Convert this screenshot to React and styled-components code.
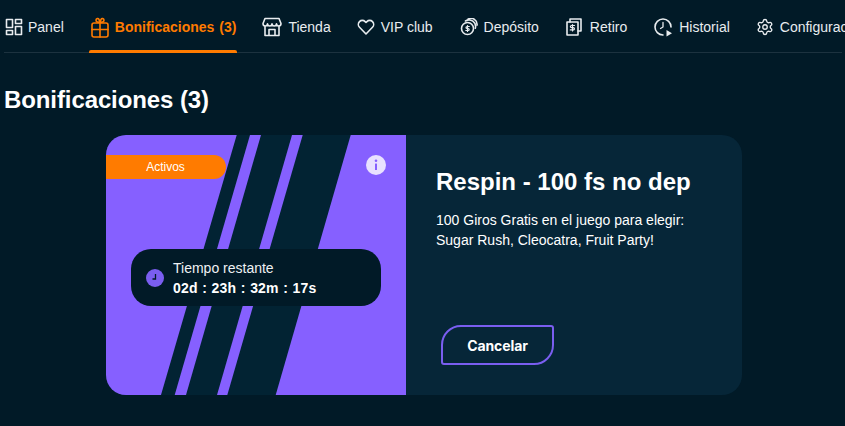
import React from "react";
import styled, { createGlobalStyle } from "styled-components";
import { Settings } from "lucide-react";

const Global = createGlobalStyle`
  html, body { margin: 0; padding: 0; background: #011a27; }
  body { width: 845px; height: 426px; overflow: hidden; font-family: "Liberation Sans", Arial, sans-serif; color: #fff; }
  * { box-sizing: border-box; }
`;

const Page = styled.div`
  width: 845px;
  height: 426px;
  overflow: hidden;
  padding-left: 4px;
`;

const Nav = styled.nav`
  display: flex;
  align-items: stretch;
  height: 53px;
  width: 838px;
  border-bottom: 1px solid #1c323f;
`;

const NavItem = styled.a`
  position: relative;
  flex: none;
  display: flex;
  align-items: center;
  gap: ${(p) => p.$gap ?? 6}px;
  height: 52px;
  margin-left: ${(p) => p.$ml ?? 27}px;
  padding: ${(p) => (p.$active ? "2px 1px 0 2px" : "2px 0 0 0")};
  font-size: 14px;
  line-height: 16px;
  color: ${(p) => (p.$active ? "#ff7b00" : "#e8ecef")};
  font-weight: ${(p) => (p.$active ? 700 : 400)};
  word-spacing: ${(p) => (p.$active ? "1px" : "0")};
  white-space: pre;
  ${(p) =>
    p.$active &&
    `&::after { content: ""; position: absolute; left: 0; right: 0; bottom: -1px; height: 3px; background: #ff7b00; border-radius: 2px 2px 0 0; }`}
`;

const Icon = styled.svg`
  flex: none;
  fill: none;
  stroke: currentColor;
  stroke-width: 1.6;
  stroke-linecap: round;
  stroke-linejoin: round;
`;

const Gear = styled(Settings)`
  flex: none;
`;

const Title = styled.h1`
  margin: 33px 0 0 0;
  font-size: 24px;
  line-height: 28px;
  font-weight: 700;
  letter-spacing: -0.1px;
  color: #fff;
`;

const Card = styled.section`
  display: flex;
  width: 636px;
  height: 260px;
  margin: 21px 0 0 102px;
  border-radius: 20px;
  overflow: hidden;
  background: #062638;
`;

const Visual = styled.div`
  position: relative;
  flex: none;
  width: 300px;
  height: 260px;
  background: #8660ff;
`;

const Stripes = styled.svg`
  position: absolute;
  inset: 0;
  fill: #022333;
`;

const Badge = styled.div`
  position: absolute;
  left: 0;
  top: 20px;
  width: 120px;
  height: 24px;
  padding-right: 1px;
  border-radius: 0 12px 12px 0;
  background: #ff7b00;
  color: #fff;
  font-size: 12px;
  display: flex;
  align-items: center;
  justify-content: center;
`;

const InfoDot = styled.svg`
  position: absolute;
  left: 260px;
  top: 20px;
`;

const Timer = styled.div`
  position: absolute;
  left: 25px;
  top: 114px;
  width: 250px;
  height: 57px;
  border-radius: 20px;
  background: #011a27;
  display: flex;
  align-items: center;
  gap: 9px;
  padding: 0 15px;
`;

const TimerText = styled.div`
  display: flex;
  flex-direction: column;
  gap: 4px;
`;

const TimerLabel = styled.div`
  font-size: 14px;
  line-height: 16px;
  color: #eef1f3;
`;

const TimerValue = styled.div`
  font-size: 14px;
  line-height: 16px;
  font-weight: 700;
  letter-spacing: 0.2px;
  word-spacing: 0.4px;
`;

const Body = styled.div`
  flex: 1;
  display: flex;
  flex-direction: column;
  align-items: flex-start;
  padding: 32px 0 30px 30px;
`;

const CardTitle = styled.h2`
  margin: 0;
  font-size: 24px;
  line-height: 29px;
  font-weight: 700;
`;

const Desc = styled.p`
  margin: 14px 0 0 0;
  font-size: 14px;
  line-height: 20px;
  color: #fff;
`;

const Cancel = styled.button`
  margin: auto 0 0 5px;
  width: 113px;
  height: 40px;
  border: 2px solid #7a5ef0;
  border-radius: 20px 3px 20px 3px;
  background: transparent;
  color: #fff;
  font-family: Inter, "Liberation Sans", sans-serif;
  font-weight: 700;
  font-size: 14px;
  letter-spacing: -0.1px;
  padding: 0;
`;

const Panel = () => (
  <Icon width="18" height="18" viewBox="0 0 18 18">
    <rect x="1.5" y="1.5" width="6" height="8" />
    <rect x="10.500" y="1.500" width="6" height="4" />
    <rect x="1.500" y="12.500" width="6" height="4" />
    <rect x="10.500" y="8.500" width="6" height="8" />
  </Icon>
);
const Gift = () => (
  <Icon width="18" height="21" viewBox="0 0 18 21">
    <rect x="1" y="6" width="16" height="14" rx="2" />
    <path d="M1 12.500h16M9 6v14" />
    <path d="M9 5.500C6 5.500 5 4.500 5 3a1.600 1.600 0 0 1 3-.6L9 5.500l1-3.100A1.600 1.600 0 0 1 13 3c0 1.500-1 2.500-4 2.500Z" />
  </Icon>
);
const Store = () => (
  <Icon width="20" height="20" viewBox="0 0 20 20">
    <path d="M3 1.500h14l2 5c0 1.500-1 2.500-2.250 2.500S14.500 8 14.500 6.800C14.500 8 13.400 9 12.250 9S10 8 10 6.800C10 8 8.900 9 7.750 9S5.500 8 5.500 6.800C5.500 8 4.500 9 3.250 9S1 8 1 6.500l2-5Z" />
    <path d="M3 9.500V18.500h14V9.500M7 18.500v-6h6v6" />
  </Icon>
);
const Heart = () => (
  <Icon width="18" height="18" viewBox="0 0 18 18">
    <path d="M9 16 2.500 9.300a4.100 4.100 0 0 1 0-5.700 3.900 3.900 0 0 1 5.600 0L9 4.500l.9-.9a3.900 3.900 0 0 1 5.600 0 4.100 4.100 0 0 1 0 5.700L9 16Z" />
  </Icon>
);
const Coins = () => (
  <Icon width="18" height="18" viewBox="0 0 18 18">
    <circle cx="7.500" cy="10.500" r="6" />
    <path d="M5.500 3a6.500 6.500 0 0 1 9.800 7.200" />
    <path d="M8 1.200a6 6 0 0 1 9 6" />
    <path d="M9.300 8.500H7a1 1 0 0 0 0 2h1.200a1 1 0 0 1 0 2H5.800M7.500 7.500v6" strokeWidth="1.200" />
  </Icon>
);
const Bills = () => (
  <Icon width="16" height="18" viewBox="0 0 16 18">
    <path d="M4 4V1h11v12h-3" />
    <rect x="1" y="4" width="11" height="13" />
    <path d="M8.500 7.500H5.500a.9.900 0 0 0 0 2.200h1.800a.9.900 0 0 1 0 2.200H4.300M6.500 6.500v6.500" strokeWidth="1.200" />
  </Icon>
);
const History = () => (
  <Icon width="20" height="19" viewBox="0 0 20 19">
    <path d="M9 17a8 8 0 1 1 8-8" />
    <path d="M9 4.500v4.500l-2.500 1.500" strokeWidth="1.300" />
    <path d="M12.500 12v6.500l5.500-3.200-5.500-3.300Z" fill="currentColor" stroke="none" />
  </Icon>
);

const stripes = [
  [236.7, 250, 161, 174.7],
  [261, 292, 186, 217],
  [302.7, 350.7, 227.3, 275.7],
];

export default function App() {
  return (
    <Page>
      <Global />
      <Nav>
        <NavItem $ml={1} $gap={5}><Panel />Panel</NavItem>
        <NavItem $ml={25} $active><Gift />Bonificaciones (3)</NavItem>
        <NavItem $ml={25}><Store />Tienda</NavItem>
        <NavItem $ml={26}><Heart />VIP club</NavItem>
        <NavItem><Coins />Depósito</NavItem>
        <NavItem $gap={8}><Bills />Retiro</NavItem>
        <NavItem $gap={5}><History />Historial</NavItem>
        <NavItem $ml={26}><Gear size={18} strokeWidth={1.8} />Configuración</NavItem>
      </Nav>
      <Title>Bonificaciones (3)</Title>
      <Card>
        <Visual>
          <Stripes width="300" height="260" viewBox="0 0 300 260">
            {stripes.map(([a, b, c, d]) => (
              <polygon key={a} points={`${a - 106},0 ${b - 106},0 ${d - 106},260 ${c - 106},260`} />
            ))}
          </Stripes>
          <Badge>Activos</Badge>
          <InfoDot width="20" height="20" viewBox="0 0 20 20">
            <circle cx="10" cy="10" r="10" fill="#e9e1ff" />
            <circle cx="10" cy="5.800" r="1.300" fill="#8660ff" />
            <rect x="9" y="8.500" width="2" height="6.500" rx="0.500" fill="#8660ff" />
          </InfoDot>
          <Timer>
            <svg width="18" height="18" viewBox="0 0 18 18">
              <circle cx="9" cy="9" r="9" fill="#7a5ef0" />
              <path d="M9.500 5v5H6.500" fill="none" stroke="#011a27" strokeWidth="1.300" />
            </svg>
            <TimerText>
              <TimerLabel>Tiempo restante</TimerLabel>
              <TimerValue>02d : 23h : 32m : 17s</TimerValue>
            </TimerText>
          </Timer>
        </Visual>
        <Body>
          <CardTitle>Respin - 100 fs no dep</CardTitle>
          <Desc>
            100 Giros Gratis en el juego para elegir:
            <br />
            Sugar Rush, Cleocatra, Fruit Party!
          </Desc>
          <Cancel>Cancelar</Cancel>
        </Body>
      </Card>
    </Page>
  );
}
